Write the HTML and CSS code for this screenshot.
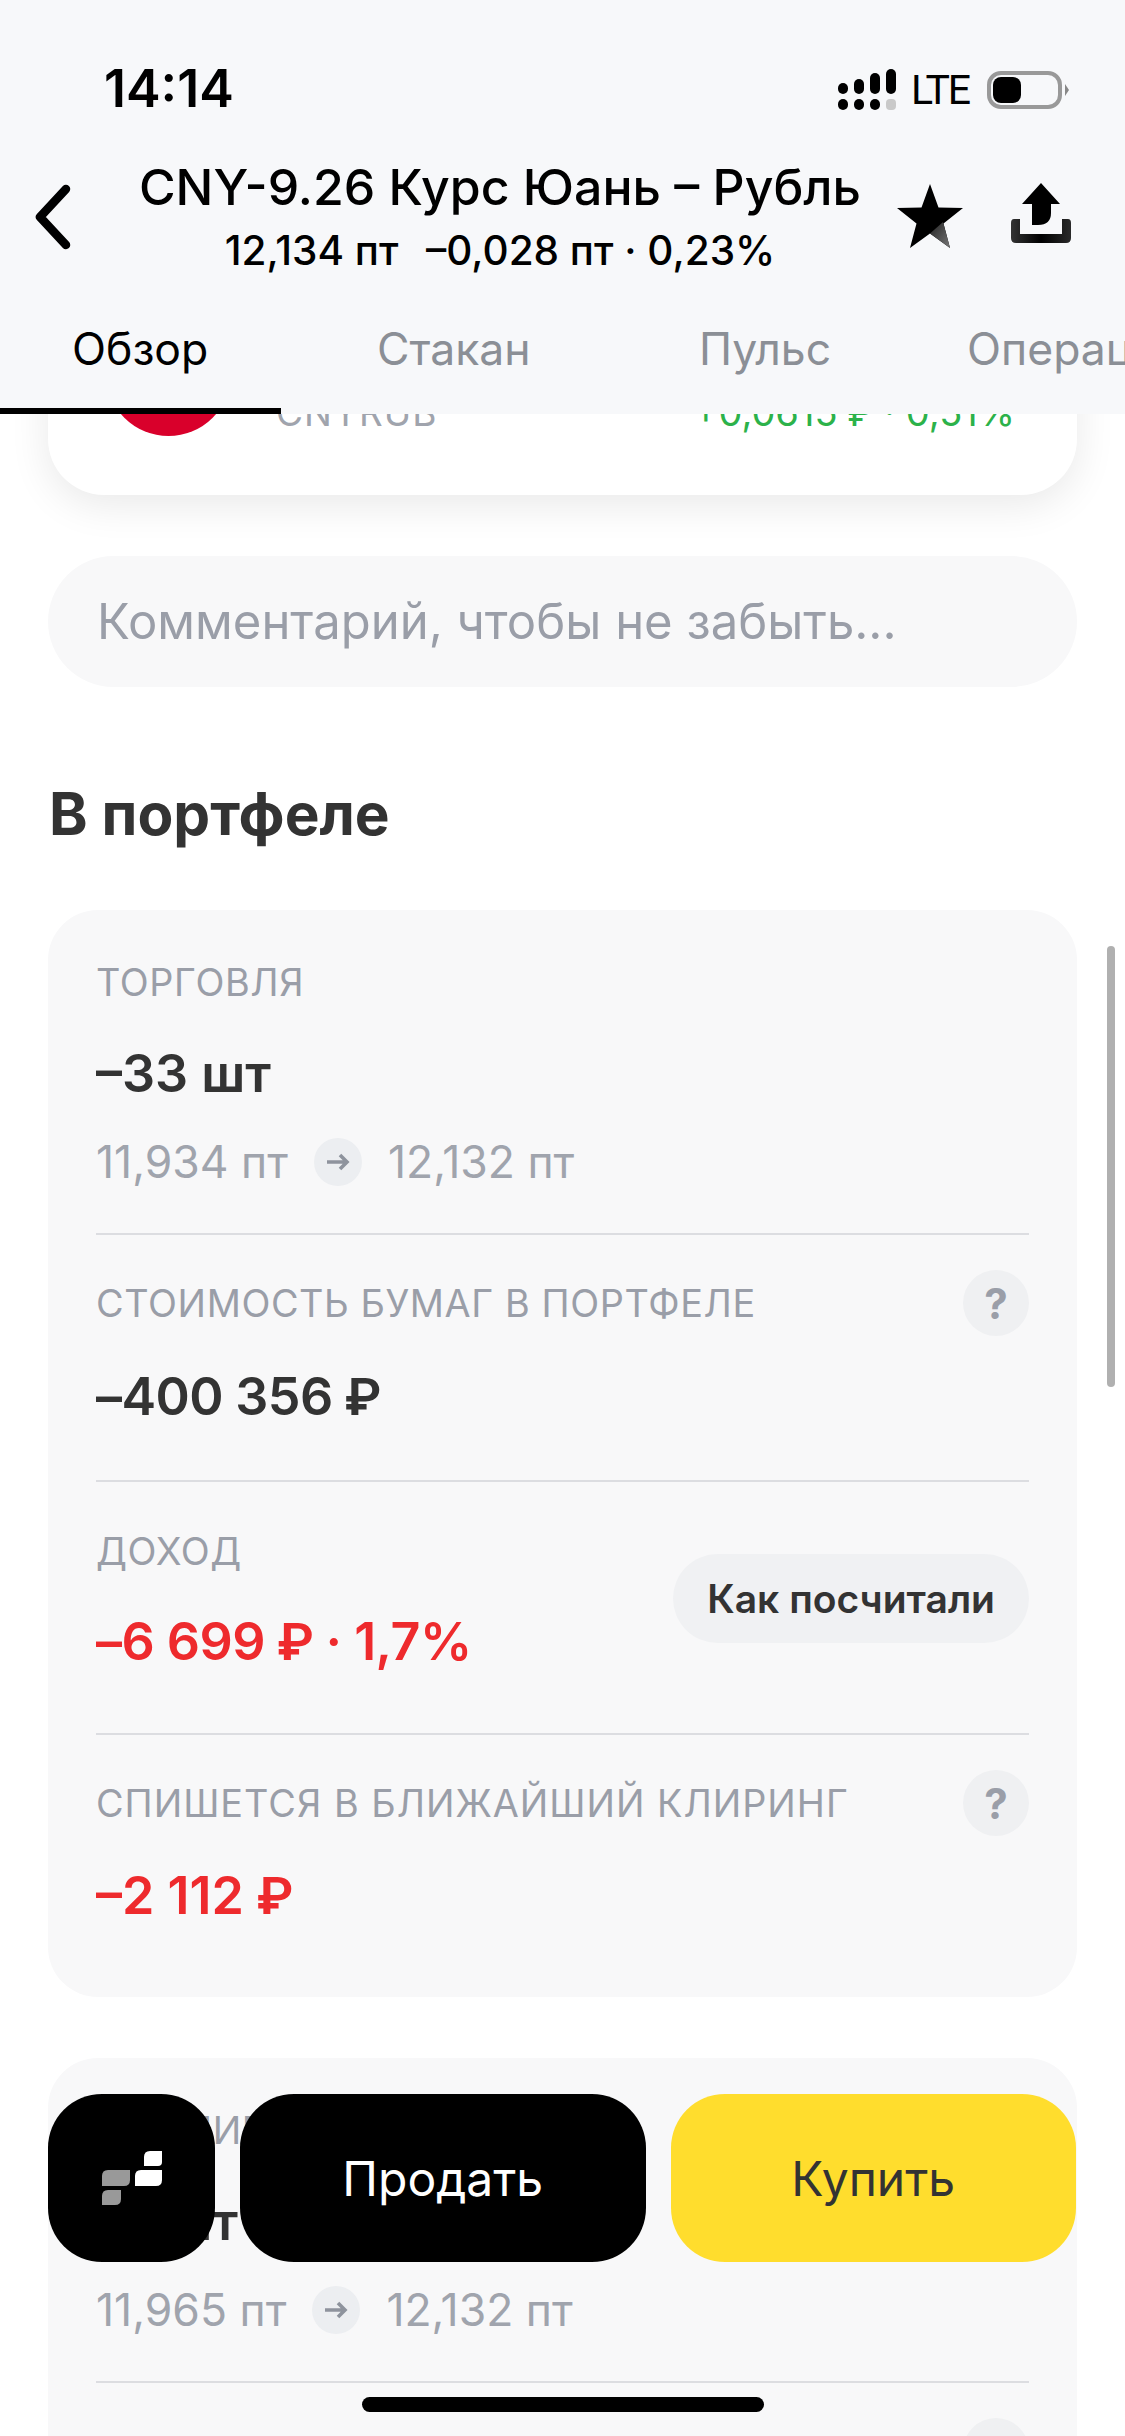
FILE: index.html
```html
<!DOCTYPE html>
<html lang="ru">
<head>
<meta charset="utf-8">
<title>CNY-9.26</title>
<link rel="stylesheet" href="styles.css">
</head>
<body>
<div class="screen">
  <main class="content">
    <section class="quote-card">
      <span class="quote-logo"></span>
      <span class="quote-ticker">CNYRUB</span>
      <span class="quote-change">+0,0615 <span class="rub">₽</span> · 0,51%</span>
    </section>
    <div class="comment">Комментарий, чтобы не забыть...</div>
    <h2 class="section-title">В портфеле</h2>
    <section class="panel">
      <div class="row row-trade">
        <div class="label">ТОРГОВЛЯ</div>
        <div class="value">–33 шт</div>
        <div class="prices"><span>11,934 пт</span><span class="arrow"><svg viewBox="0 0 24 24" width="24" height="24"><path d="M1 12h20M14 5l7 7-7 7" fill="none" stroke="#8e939d" stroke-width="3.600"/></svg></span><span>12,132 пт</span></div>
      </div>
      <div class="row row-cost">
        <div class="label-line"><div class="label">СТОИМОСТЬ БУМАГ В ПОРТФЕЛЕ</div><span class="hint">?</span></div>
        <div class="value">–400 356 <span class="rub">₽</span></div>
      </div>
      <div class="row row-income">
        <div class="income-text">
          <div class="label">ДОХОД</div>
          <div class="value red">–6 699 <span class="rub">₽</span> · 1,7%</div>
        </div>
        <span class="how">Как посчитали</span>
      </div>
      <div class="row row-clearing">
        <div class="label-line"><div class="label">СПИШЕТСЯ В БЛИЖАЙШИЙ КЛИРИНГ</div><span class="hint">?</span></div>
        <div class="value red">–2 112 <span class="rub">₽</span></div>
      </div>
    </section>
    <section class="panel panel-next">
      <div class="row row-trade">
        <div class="label">ЗА КЛИРИНГ</div>
        <div class="value">–3 шт</div>
        <div class="prices"><span>11,965 пт</span><span class="arrow"><svg viewBox="0 0 24 24" width="24" height="24"><path d="M1 12h20M14 5l7 7-7 7" fill="none" stroke="#8e939d" stroke-width="3.600"/></svg></span><span>12,132 пт</span></div>
      </div>
      <div class="row row-cost"><div class="label-line end"><span class="hint">?</span></div></div>
    </section>
  </main>

  <header class="top">
    <div class="status">
      <span class="time">14:14</span>
      <div class="status-right">
        <svg class="signal" width="62" height="44" viewBox="0 0 62 44">
          <g fill="#000">
            <rect x="0" y="15" width="10" height="11" rx="5"/><rect x="16" y="11" width="10" height="15" rx="5"/><rect x="32" y="5" width="10" height="21" rx="5"/><rect x="48" y="1" width="10" height="25" rx="5"/>
            <rect x="0" y="31" width="10" height="11" rx="5"/><rect x="16" y="31" width="10" height="11" rx="5"/><rect x="32" y="31" width="10" height="11" rx="5"/>
          </g>
          <rect x="48" y="31" width="10" height="11" rx="4" fill="#c9c9c9"/>
        </svg>
        <span class="lte">LTE</span>
        <span class="battery"><span class="battery-fill"></span></span>
        <span class="battery-nub"></span>
      </div>
    </div>
    <div class="nav">
      <svg class="back" width="40" height="66" viewBox="0 0 40 66"><path d="M33 5 7 33l26 28" fill="none" stroke="#000" stroke-width="8.500" stroke-linecap="round" stroke-linejoin="round"/></svg>
      <div class="titles">
        <div class="title">CNY-9.26 Курс Юань – Рубль</div>
        <div class="subtitle">12,134 пт  <span class="delta">–0,028 пт · 0,23%</span></div>
      </div>
      <svg class="star" width="68" height="66" viewBox="0 0 68 66">
        <defs><linearGradient id="starShade" x1="0" y1="0" x2="1" y2="1"><stop offset="0" stop-color="#222"/><stop offset="1" stop-color="#777"/></linearGradient></defs>
        <path d="M34 1 42.500 24.500 67 25 47.500 40.500 54 65 34 50.500 14 65 20.500 40.500 1 25 25.500 24.500Z" fill="#000"/>
        <path d="M47 39 54 65 34 50.500Z" fill="url(#starShade)"/>
      </svg>
      <svg class="share" width="60" height="60" viewBox="0 0 60 60">
        <defs><linearGradient id="trayShade" x1="0" y1="0" x2="1" y2="0"><stop offset="0" stop-color="#333"/><stop offset="0.5" stop-color="#000"/><stop offset="1" stop-color="#2a2a2a"/></linearGradient></defs>
        <path d="M30 0 49 21H40V30Q40 42 27 42H21V21H11Z" fill="#000"/>
        <path d="M3 36H9V51H51V36H57Q60 36 60 40V55Q60 60 55 60H5Q0 60 0 55V40Q0 36 3 36Z" fill="url(#trayShade)"/>
      </svg>
    </div>
    <nav class="tabs">
      <span class="tab active">Обзор</span>
      <span class="tab t2">Стакан</span>
      <span class="tab t3">Пульс</span>
      <span class="tab t4">Операции</span>
    </nav>
  </header>

  <div class="actions">
    <button class="btn btn-logo">
      <svg width="60" height="54" viewBox="0 0 60 54">
        <path d="M6 19H28V29Q28 35 22 35H0V25Q0 19 6 19Z" fill="#999"/>
        <path d="M6 39H19V48Q19 54 13 54H0V45Q0 39 6 39Z" fill="#999"/>
        <path d="M48 0H60V11Q60 15 56 15H42V6Q42 0 48 0Z" fill="#fff"/>
        <path d="M39 19H60V29Q60 35 54 35H33V25Q33 19 39 19Z" fill="#fff"/>
      </svg>
    </button>
    <button class="btn btn-sell">Продать</button>
    <button class="btn btn-buy">Купить</button>
  </div>
  <div class="home"></div>
  <div class="scrollbar"></div>
</div>
</body>
</html>
```
FILE: styles.css
```css
* { box-sizing: border-box; }
html, body { margin: 0; padding: 0; }
body { background: #fff; font-family: Inter, "Noto Sans", "Liberation Sans", sans-serif; color: #333; }
.screen { position: relative; width: 1125px; height: 2436px; overflow: hidden; background: #fff; }
.rub { font-family: Roboto, sans-serif; }

.content { position: absolute; left: 0; right: 0; top: 0; padding: 300px 48px 0; }
.quote-card { height: 195px; background: #fff; border-radius: 0 0 56px 56px; box-shadow: 0 10px 40px rgba(0,0,0,.09); display: flex; align-items: flex-start; padding: 11px 62px 0 58px; }
.quote-logo { width: 125px; height: 125px; border-radius: 50%; background: #d9002b; flex: none; }
.quote-ticker { margin-left: 45px; margin-top: 80px; font-size: 37px; line-height: 44px; color: #a0a4ad; letter-spacing: 1px; }
.quote-change { margin-left: auto; margin-top: 79px; font-size: 38px; line-height: 44px; color: #2cb24a; }

.comment { margin-top: 61px; height: 131px; border-radius: 66px; background: #f8f8f9; display: flex; align-items: center; padding-left: 49px; font-size: 49px; color: #9a9ea8; }
.section-title { margin: 92px 0 0; padding-left: 1px; font-size: 58.500px; line-height: 70px; font-weight: 700; color: #333; }

.panel { margin-top: 61px; border-radius: 50px; background: #f8f8f9; padding: 0 48px; height: 1087px; }
.panel-next { height: 700px; }
.row { border-bottom: 2px solid #dcdde1; }
.row:last-child { border-bottom: 0; }
.label { font-size: 37.800px; line-height: 44px; color: #9a9ea8; letter-spacing: .6px; white-space: nowrap; }
.value { font-size: 52px; line-height: 60px; font-weight: 600; color: #333; white-space: nowrap; }
.value.red { color: #ee2a2d; }
.prices { display: flex; align-items: center; gap: 26px; font-size: 44.500px; line-height: 50px; color: #a0a4ad; }
.arrow { width: 48px; height: 48px; border-radius: 50%; background: #eceef1; display: flex; align-items: center; justify-content: center; }
.hint { width: 66px; height: 66px; border-radius: 50%; background: #eff0f2; display: flex; align-items: center; justify-content: center; font-size: 42px; font-weight: 700; color: #9a9ea8; flex: none; }
.label-line { display: flex; justify-content: space-between; align-items: center; }
.label-line.end { justify-content: flex-end; }

.row-trade { height: 325px; padding-top: 50px; }
.row-trade .value { margin-top: 40px; }
.row-trade .prices { margin-top: 33px; }
.row-cost { height: 247px; padding-top: 35px; }
.row-cost .value { margin-top: 31px; letter-spacing: -.6px; }
.row-income { height: 253px; display: flex; justify-content: space-between; align-items: flex-start; }
.income-text { padding-top: 47px; }
.row-income .value { margin-top: 39px; letter-spacing: -.55px; }
.how { margin-top: 72px; height: 89px; padding: 0 34px; border-radius: 45px; background: #f0f1f3; display: flex; align-items: center; font-size: 39px; font-weight: 600; color: #333; white-space: nowrap; }
.row-clearing { padding-top: 35px; }
.row-clearing .label { letter-spacing: 1px; }
.row-clearing .value { margin-top: 30px; }

.top { position: absolute; left: 0; right: 0; top: 0; height: 414px; background: #f7f8fa; }
.status { height: 134px; padding: 60px 56px 0 104px; display: flex; justify-content: space-between; }
.time { font-size: 52px; line-height: 58px; font-weight: 600; color: #000; }
.status-right { display: flex; align-items: center; height: 44px; margin-top: 8px; }
.signal { flex: none; }
.lte { font-family: Roboto, sans-serif; font-size: 41px; margin-left: 11px; width: 60px; color: #000; letter-spacing: -2.200px; }
.battery { margin-left: 16px; width: 75px; height: 38px; border: 4px solid #999; border-radius: 14px; padding: 2px; display: block; }
.battery-fill { display: block; width: 28px; height: 26px; background: #000; border-radius: 8px; }
.battery-nub { margin-left: 3px; width: 0; height: 0; border-left: 4px solid #888; border-top: 6px solid transparent; border-bottom: 6px solid transparent; }

.nav { height: 148px; position: relative; }
.back { position: absolute; left: 33px; top: 50px; }
.titles { width: 1000px; text-align: center; padding-top: 22px; }
.title { font-size: 50px; line-height: 62px; font-weight: 500; color: #000; white-space: nowrap; }
.subtitle { font-size: 40.500px; line-height: 50px; margin-top: 8px; font-weight: 500; color: #000; white-space: pre; }
.delta { margin-left: 6px; }
.star { position: absolute; left: 896px; top: 49px; }
.share { position: absolute; left: 1011px; top: 49px; }

.tabs { position: relative; height: 132px; font-size: 44.500px; overflow: hidden; }
.tab { position: absolute; top: 42px; line-height: 50px; color: #8b8f96; white-space: nowrap; }
.tab.active { left: 72px; color: #000; }
.t2 { left: 377px; }
.t3 { left: 699px; }
.t4 { left: 967px; }
.tabs::after { content: ""; position: absolute; left: 0; bottom: 0; width: 281px; height: 6px; background: #000; }

.actions { position: absolute; left: 48px; right: 49px; top: 2094px; display: flex; gap: 25px; }
.btn { height: 168px; border: 0; border-radius: 54px; font-family: Inter, sans-serif; font-size: 48px; font-weight: 400; padding: 0; flex: 1 1 0; display: flex; align-items: center; justify-content: center; }
.btn-logo { flex: 0 0 167px; background: #000; }
.btn-sell { background: #000; color: #fff; }
.btn-buy { background: #ffdd2d; color: #333; }
.home { position: absolute; left: 362px; top: 2397px; width: 402px; height: 15px; border-radius: 8px; background: #000; }
.scrollbar { position: absolute; left: 1107px; top: 946px; width: 8px; height: 441px; border-radius: 4px; background: #b0b0b0; }
```
